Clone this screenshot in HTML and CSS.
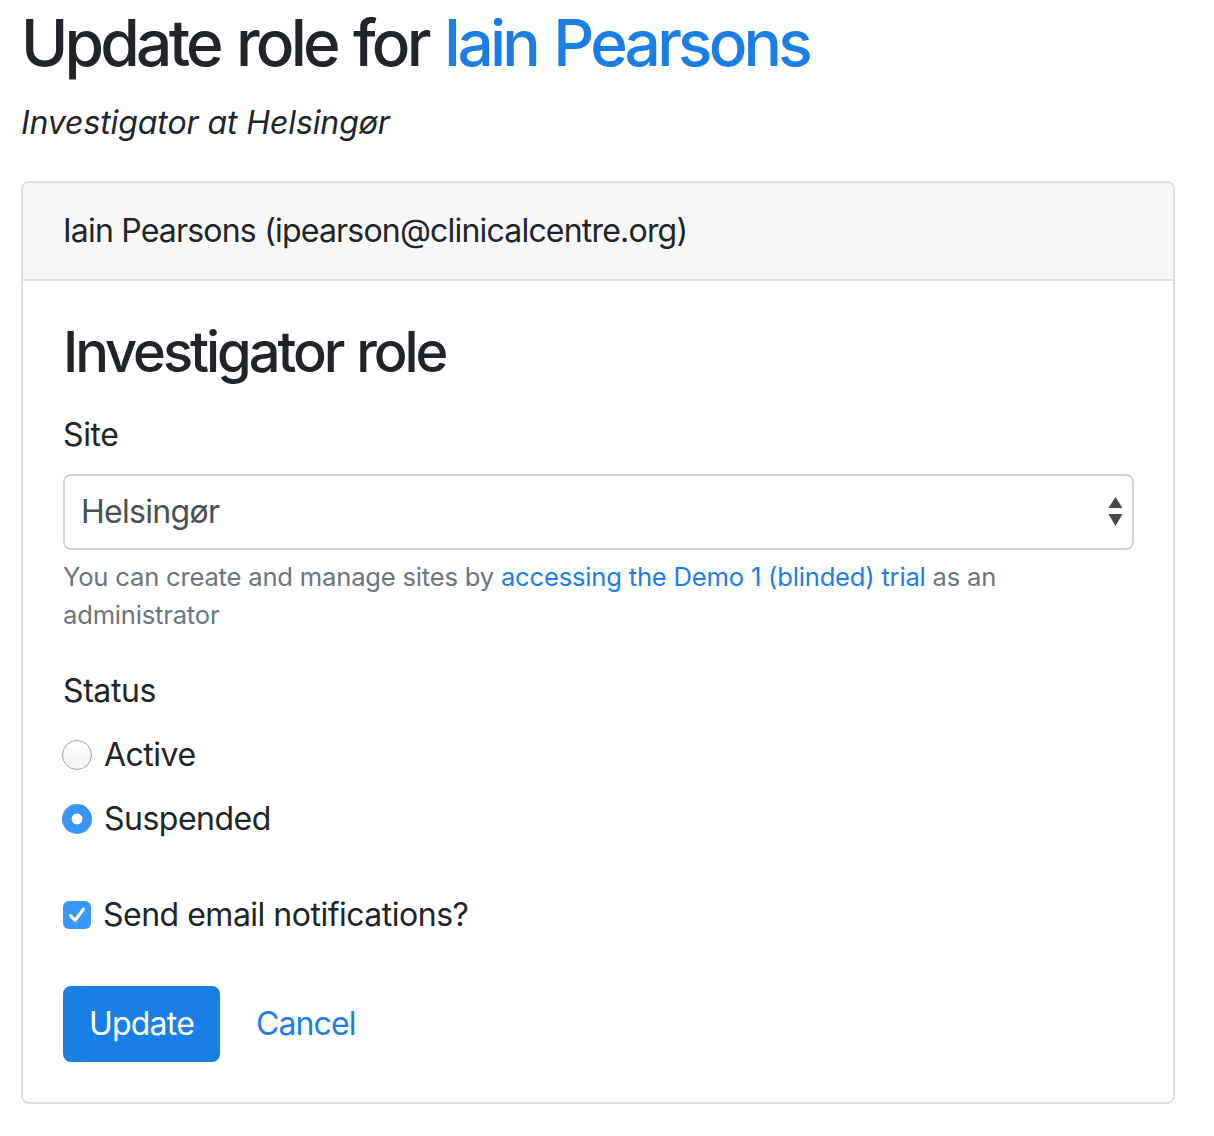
FILE: index.html
```html
<!DOCTYPE html>
<html lang="en">
<head>
<meta charset="utf-8">
<title>Update role</title>
<link rel="stylesheet" href="styles.css">
</head>
<body>
<main class="page">
  <h1 class="title">Update role for <a href="#" class="title-link">Iain Pearsons</a></h1>
  <p class="subtitle"><em>Investigator at Helsingør</em></p>

  <section class="card">
    <div class="card-header">Iain Pearsons (ipearson@clinicalcentre.org)</div>
    <form class="card-body">
      <h3 class="role-title">Investigator role</h3>

      <div class="form-group">
        <label class="field-label" for="site">Site</label>
        <div class="select" id="site">
          <span class="select-value">Helsingør</span>
          <svg class="select-arrows" width="16" height="30" viewBox="0 0 16 30" aria-hidden="true">
            <path d="M7.5 0 L14.5 11 L0.5 11 Z" fill="#44494f"/>
            <path d="M0.5 17 L14.5 17 L7.5 29 Z" fill="#44494f"/>
          </svg>
        </div>
        <small class="help">You can create and manage sites by <a href="#" class="link">accessing the Demo 1 (blinded) trial</a> as an administrator</small>
      </div>

      <div class="status" role="radiogroup">
        <div class="field-label legend">Status</div>
        <label class="check-row"><span class="radio"></span>Active</label>
        <label class="check-row"><span class="radio radio-on"></span>Suspended</label>
      </div>

      <label class="check-row notify">
        <span class="checkbox">
          <svg width="28" height="28" viewBox="0 0 28 28" aria-hidden="true"><path d="M7.5 14.5 L12 19.5 L20.5 8" fill="none" stroke="#fff" stroke-width="3" stroke-linecap="round" stroke-linejoin="round"/></svg>
        </span>Send email notifications?</label>

      <div class="actions">
        <button type="button" class="btn-primary">Update</button>
        <a href="#" class="btn-link">Cancel</a>
      </div>
    </form>
  </section>
</main>
</body>
</html>
```

FILE: styles.css
```css
* { box-sizing: border-box; }

html, body {
  margin: 0;
  background: #fff;
}

body {
  font-family: Inter, "Noto Sans", "Liberation Sans", sans-serif;
  font-size: 32px;
  line-height: 1.5;
  color: #212529;
}

.page {
  padding: 5px 0 0 21px;
  width: 1175px;
}

.title {
  margin: 0 0 17px 0;
  font-size: 64px;
  font-weight: 500;
  line-height: 1.2;
  letter-spacing: -3.8px;
  word-spacing: 3px;
}

.title-link {
  color: #1b7ee6;
  text-decoration: none;
}

.subtitle {
  margin: 0 0 34px 0;
  font-size: 32px;
  letter-spacing: -0.1px;
}

.card {
  border: 2px solid #dfdfdf;
  border-radius: 8px;
  overflow: hidden;
}

.card-header {
  background: #f7f7f7;
  border-bottom: 2px solid #dfdfdf;
  padding: 24px 40px;
  letter-spacing: -0.8px;
}

.card-body {
  padding: 38px 40px 40px;
  display: flex;
  flex-direction: column;
}

.role-title {
  margin: 0 0 25px 0;
  font-size: 56px;
  font-weight: 500;
  line-height: 1.2;
  letter-spacing: -3.05px;
  word-spacing: 2px;
}

.form-group {
  display: flex;
  flex-direction: column;
  align-items: flex-start;
  margin-bottom: 32px;
}

.field-label {
  display: block;
  margin-bottom: 15px;
  letter-spacing: -0.4px;
}

.select {
  width: 1071px;
  height: 76px;
  border: 2px solid #ced4da;
  border-radius: 8px;
  padding: 0 8px 0 16px;
  display: flex;
  align-items: center;
  justify-content: space-between;
  color: #495057;
  background: #fff;
}

.select-value { letter-spacing: -0.7px; }

.help {
  margin-top: 8px;
  font-size: 25.6px;
  line-height: 38.4px;
  color: #6c757d;
  letter-spacing: -0.2px;
}

.link {
  color: #1b7ee6;
  text-decoration: none;
}

.status {
  display: flex;
  flex-direction: column;
  gap: 16px;
}

.legend {
  margin-bottom: 0;
}

.check-row {
  display: flex;
  align-items: center;
  gap: 12px;
  height: 48px;
  letter-spacing: -0.5px;
}

.radio {
  width: 30px;
  height: 30px;
  border-radius: 50%;
  border: 1.5px solid #a3a3a3;
  background: linear-gradient(#ffffff, #f3f3f3);
  margin-left: -1px;
  flex: none;
}

.radio-on {
  border: 0;
  background: radial-gradient(circle at center, #fff 0, #fff 5px, #3a95fb 5.8px);
}

.notify {
  margin-top: 48px;
  align-self: flex-start;
}

.checkbox {
  width: 28px;
  height: 28px;
  border-radius: 6px;
  background: #3b96fb;
  display: flex;
  flex: none;
}

.actions {
  margin-top: 47px;
  display: flex;
  align-items: center;
  gap: 36px;
}

.btn-primary {
  font: inherit;
  letter-spacing: -0.8px;
  color: #fff;
  background: #1a7ee7;
  border: 2px solid #1a7ee7;
  border-radius: 8px;
  padding: 12px 24px;
  line-height: 48px;
  height: 76px;
}

.btn-link {
  color: #1b7ee6;
  text-decoration: none;
  letter-spacing: -0.9px;
}
```
